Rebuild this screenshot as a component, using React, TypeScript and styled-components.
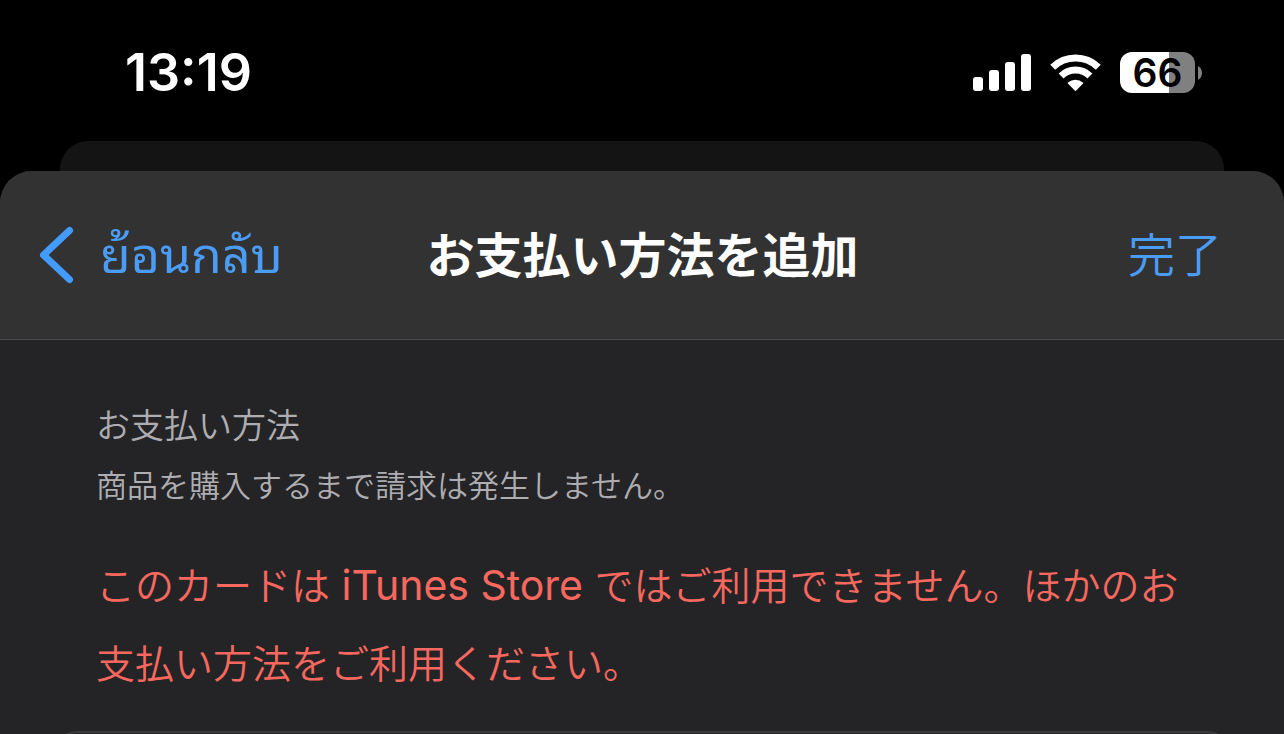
import React from "react";
import styled, { createGlobalStyle } from "styled-components";

const GlobalStyle = createGlobalStyle`
  *, *::before, *::after { box-sizing: border-box; }
  html, body, #root { height: 100%; }
  body {
    margin: 0;
    background: #000;
    color: #fff;
    font-family: Inter, "Noto Sans CJK JP", "Noto Sans Thai Looped", Loma, Waree, Garuda, "Noto Sans Thai", sans-serif;
    overflow: hidden;
  }
`;

const Screen = styled.div`
  display: flex;
  flex-direction: column;
  height: 100vh;
  overflow: hidden;
`;

const StatusBar = styled.div`
  flex: none;
  display: flex;
  align-items: center;
  justify-content: space-between;
  height: 141px;
  padding: 4px 82px 0 125px;
`;

const Clock = styled.time`
  font-size: 52px;
  line-height: 60px;
  font-weight: 600;
`;

const StatusIcons = styled.div`
  display: flex;
  align-items: center;
  gap: 18px;
`;

const Battery = styled.div`
  display: flex;
  align-items: center;
  gap: 3px;
`;

const BatteryBody = styled.div<{ $level: number }>`
  width: 75px;
  height: 41px;
  border-radius: 12px;
  background: linear-gradient(
    to right,
    #fff ${(p) => p.$level}%,
    #808080 ${(p) => p.$level}%
  );
  color: #000;
  font-size: 39px;
  line-height: 42px;
  font-weight: 600;
  text-align: center;
`;

const BackSheet = styled.div`
  flex: none;
  height: 30px;
  margin: 0 60px;
  border-radius: 28px 28px 0 0;
  background: #141414;
`;

const Sheet = styled.main`
  flex: 1;
  display: flex;
  flex-direction: column;
  border-radius: 32px 32px 0 0;
  background: #242426;
  overflow: hidden;
`;

const NavBar = styled.header`
  flex: none;
  display: grid;
  grid-template-columns: 1fr auto 1fr;
  align-items: center;
  height: 169px;
  padding: 0 62px 0 39px;
  background: #323232;
  border-bottom: 1px solid #48484a;
`;

const NavButton = styled.button<{ $align: "start" | "end" }>`
  justify-self: ${(p) => p.$align};
  display: flex;
  align-items: center;
  gap: 26px;
  padding: 0;
  border: 0;
  background: none;
  color: #4b9cf5;
  font: inherit;
  font-size: ${(p) => (p.$align === "end" ? 47 : 50)}px;
  line-height: 60px;
  font-weight: ${(p) => (p.$align === "end" ? 350 : 400)};
  cursor: pointer;
`;

const Title = styled.h1`
  margin: 0;
  padding: 2px 0 0 24px;
  font-size: 48px;
  line-height: 60px;
  font-weight: 600;
`;

const Content = styled.section`
  flex: none;
  padding: 56px 96px 28px;
`;

const Heading = styled.h2`
  margin: 0;
  color: #aeaeb2;
  font-size: 34px;
  line-height: 60px;
  font-weight: 350;
`;

const Note = styled.p`
  margin: 0;
  color: #aeaeb2;
  font-size: 31px;
  line-height: 60px;
  font-weight: 350;
`;

const ErrorText = styled.p`
  margin: 31px 0 0;
  color: #f8685f;
  font-size: 39px;
  line-height: 78px;
  font-weight: 350;
`;

const Latin = styled.span`
  font-size: 41px;
  line-height: 60px;
  font-weight: 400;
`;

const Card = styled.div`
  flex: none;
  height: 120px;
  margin: 0 48px;
  border-top: 2px solid #39393b;
  border-radius: 30px 30px 0 0;
`;

const SignalIcon = () => (
  <svg width="59" height="38" viewBox="0 0 59 38" fill="#fff" aria-hidden="true">
    <rect x="0" y="23" width="10" height="14" rx="3" />
    <rect x="16" y="16" width="10" height="21" rx="3" />
    <rect x="32" y="8" width="10" height="29" rx="3" />
    <rect x="48" y="0" width="10" height="37" rx="3" />
  </svg>
);

const WifiIcon = () => (
  <svg width="52" height="38" viewBox="0 0 52 38" aria-hidden="true">
    <g fill="none" stroke="#fff" strokeWidth="7">
      <path d="M2.7 13.2A32.6 32.6 0 0 1 48.3 13.2" />
      <path d="M11.1 22A20.5 20.5 0 0 1 39.9 22" />
    </g>
    <path
      d="M25.5 37.2L17.9 29.6Q17.300 29 18 28.400A11.800 11.800 0 0 1 33 28.400Q33.700 29 33.100 29.600Z"
      fill="#fff"
    />
  </svg>
);

const BatteryCap = () => (
  <svg width="4" height="14" viewBox="0 0 4 14" fill="#808080" aria-hidden="true">
    <path d="M0 0C2.4 1.2 4 3.8 4 7S2.4 12.8 0 14Z" />
  </svg>
);

const BackIcon = () => (
  <svg width="35" height="58" viewBox="0 0 35 58" fill="none" aria-hidden="true">
    <path
      d="M30.5 4.5L4.5 29L30.5 53.5"
      stroke="#429bfd"
      strokeWidth="7"
      strokeLinecap="round"
      strokeLinejoin="round"
    />
  </svg>
);

const batteryLevel = 66;

export default function App() {
  return (
    <Screen>
      <GlobalStyle />
      <StatusBar>
        <Clock>13:19</Clock>
        <StatusIcons>
          <SignalIcon />
          <WifiIcon />
          <Battery>
            <BatteryBody $level={batteryLevel}>{batteryLevel}</BatteryBody>
            <BatteryCap />
          </Battery>
        </StatusIcons>
      </StatusBar>
      <BackSheet />
      <Sheet>
        <NavBar>
          <NavButton type="button" $align="start" lang="th">
            <BackIcon />
            ย้อนกลับ
          </NavButton>
          <Title lang="ja">お支払い方法を追加</Title>
          <NavButton type="button" $align="end" lang="ja">
            完了
          </NavButton>
        </NavBar>
        <Content lang="ja">
          <Heading>お支払い方法</Heading>
          <Note>商品を購入するまで請求は発生しません。</Note>
          <ErrorText role="alert">
            このカードは<Latin> iTunes Store </Latin>ではご利用できません。ほかのお支払い方法をご利用ください。
          </ErrorText>
        </Content>
        <Card />
      </Sheet>
    </Screen>
  );
}
